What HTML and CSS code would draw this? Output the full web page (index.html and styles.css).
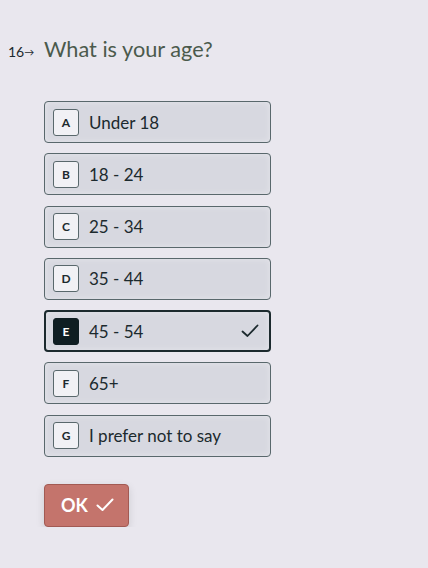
FILE: index.html
```html
<!DOCTYPE html>
<html lang="en">
  <head>
    <meta charset="UTF-8" />
    <meta name="viewport" content="width=device-width, initial-scale=1.0" />
    <title>What is your age?</title>
    <link rel="stylesheet" href="styles.css">
  </head>
  <body>
    <!-- Question block -->
    <div class="question">
      <div class="question-head">
        <span class="number">16<span class="arrow">&#8594;</span></span>
        <h2 class="title">What is your age?</h2>
      </div>

      <!-- Answer choices -->
      <div class="choices">
        <div class="choice"><span class="key">A</span><span class="label">Under 18</span></div>
        <div class="choice"><span class="key">B</span><span class="label">18 - 24</span></div>
        <div class="choice"><span class="key">C</span><span class="label">25 - 34</span></div>
        <div class="choice"><span class="key">D</span><span class="label">35 - 44</span></div>
        <div class="choice selected">
          <span class="key">E</span><span class="label">45 - 54</span>
          <svg class="tick" width="18" height="14" viewBox="0 0 18 14" fill="none">
            <path d="M1.5 7.5 L6.5 12 L16.5 1.5" stroke="#1c2a2e" stroke-width="1.8" stroke-linecap="round" stroke-linejoin="round" />
          </svg>
        </div>
        <div class="choice"><span class="key">F</span><span class="label">65+</span></div>
        <div class="choice"><span class="key">G</span><span class="label">I prefer not to say</span></div>
      </div>

      <button class="ok" type="button">
        OK
        <svg width="18" height="14" viewBox="0 0 18 14" fill="none">
          <path d="M1.5 7.5 L6.5 12 L16.5 1.5" stroke="#fff" stroke-width="2" stroke-linecap="round" stroke-linejoin="round" />
        </svg>
      </button>
    </div>
  </body>
</html>
```

FILE: styles.css
```css
body {
  margin: 0;
  background-color: #e9e7ee; /* soft lavender grey */
  font-family: "Lato", "Open Sans", sans-serif;
  color: #1c2a2e;
}
.question {
  padding: 36px 0 0 8px;
}
.question-head {
  display: flex;
  align-items: baseline;
  height: 30px;
}
.number {
  width: 36px;
  font-size: 14px;
  color: #1c2a2e;
}
.arrow {
  font-size: 10px;
  position: relative;
  top: -1px;
}
.title {
  margin: 0;
  font-size: 21.7px;
  font-weight: 400;
  color: #4b5a4c;
}
.choices {
  display: flex;
  flex-direction: column;
  gap: 10.3px;
  margin: 35px 0 0 36px;
  width: 227px;
}
.choice {
  display: flex;
  align-items: center;
  box-sizing: border-box;
  height: 42px;
  padding: 0 8px;
  border: 1px solid #59686c;
  border-radius: 4px;
  background-color: #d7d8e0;
  box-shadow: inset 0 0 6px rgba(255, 255, 255, 0.35);
}
.key {
  display: flex;
  justify-content: center;
  align-items: center;
  width: 24px;
  height: 25px;
  margin-right: 10px;
  border: 1px solid #59686c;
  border-radius: 3px;
  background-color: #f1f1f5;
  font-size: 12px;
  font-weight: 700;
}
.label {
  flex: 1;
  font-size: 17px;
}
.selected {
  border: 2px solid #1c2a2e;
  padding: 0 7px;
}
.selected .key {
  background-color: #0f1e22;
  border-color: #0f1e22;
  color: #fff;
}
.tick {
  margin-right: 3px;
}
.ok {
  display: flex;
  align-items: center;
  gap: 8px;
  margin: 27px 0 0 36px;
  height: 43px;
  padding: 0 14px 0 16px;
  border: 1px solid #a25a53;
  border-radius: 4px;
  background-color: #c4746c;
  color: #fff;
  font-family: "Lato", sans-serif;
  font-size: 18px;
  font-weight: 700;
  box-shadow: 0 3px 8px rgba(0, 0, 0, 0.12);
}
```
